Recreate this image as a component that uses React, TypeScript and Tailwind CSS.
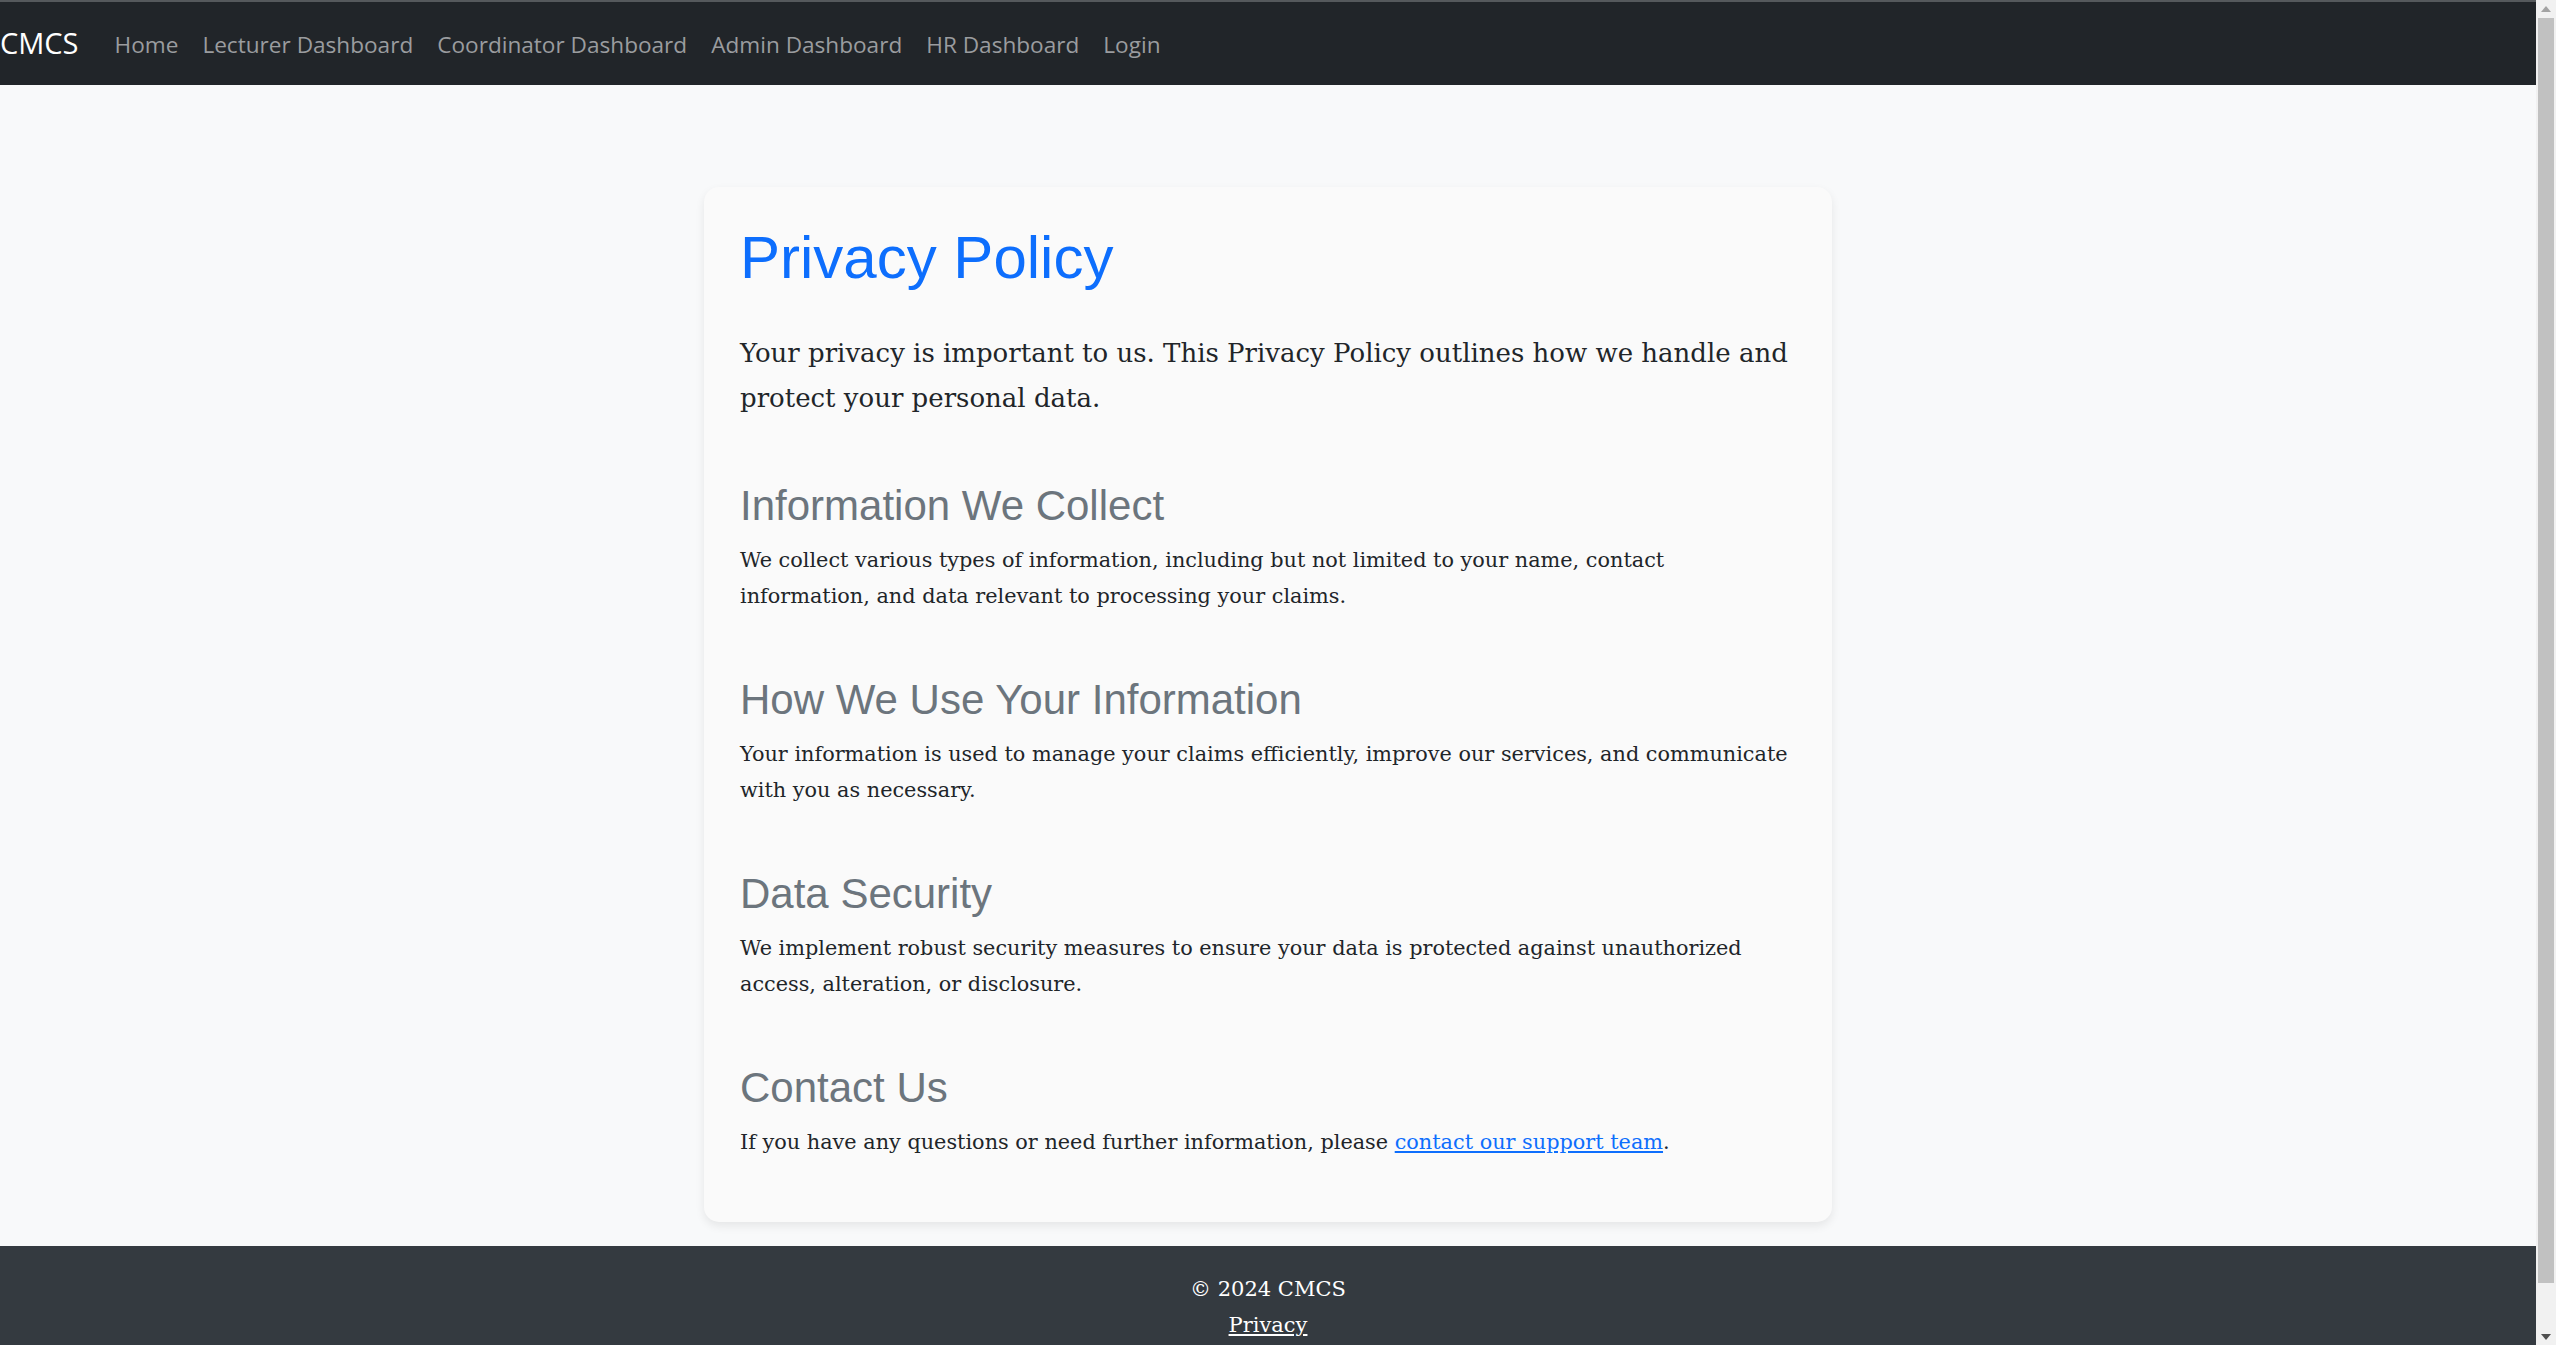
const sans = { fontFamily: '"Open Sans", "Noto Sans", sans-serif' }
const heading = { fontFamily: '"Liberation Sans", Arial, sans-serif' }
const serif = { fontFamily: '"DejaVu Serif", Georgia, serif' }

const navLinks = ['Home', 'Lecturer Dashboard', 'Coordinator Dashboard', 'Admin Dashboard', 'HR Dashboard', 'Login']

const sections = [
  {
    title: 'Information We Collect',
    lines: [
      'We collect various types of information, including but not limited to your name, contact',
      'information, and data relevant to processing your claims.',
    ],
  },
  {
    title: 'How We Use Your Information',
    lines: [
      'Your information is used to manage your claims efficiently, improve our services, and communicate',
      'with you as necessary.',
    ],
  },
  {
    title: 'Data Security',
    lines: [
      'We implement robust security measures to ensure your data is protected against unauthorized',
      'access, alteration, or disclosure.',
    ],
  },
]

function Lines({ lines }: { lines: string[] }) {
  return (
    <>
      {lines.map((line, i) => (
        <span key={i} className="block whitespace-nowrap">
          {line}
        </span>
      ))}
    </>
  )
}

function Scrollbar() {
  return (
    <div className="w-[20px] h-full bg-[#f1f1f1] flex flex-col items-center shrink-0">
      <div className="h-[17px] w-full flex items-center justify-center">
        <svg width="10" height="6" viewBox="0 0 10 6">
          <polygon points="5,0 10,6 0,6" fill="#a3a3a3" />
        </svg>
      </div>
      <div className="w-[16px] h-[1265px] bg-[#c1c1c1] mt-[1px]" />
      <div className="flex-1" />
      <div className="h-[17px] w-full flex items-center justify-center">
        <svg width="10" height="6" viewBox="0 0 10 6">
          <polygon points="0,0 10,0 5,6" fill="#505050" />
        </svg>
      </div>
    </div>
  )
}

export default function App() {
  return (
    <div className="flex h-screen overflow-hidden">
      <div className="flex-1 min-w-0 overflow-hidden bg-[#f8f9fa]">
        <nav className="h-[85px] bg-[#212529] border-t-2 border-[#55595c] flex items-center" style={sans}>
          <a className="text-white text-[29px] leading-none mr-[24px] pb-[2px]">CMCS</a>
          <ul className="flex items-center">
            {navLinks.map((link) => (
              <li key={link}>
                <a className="block px-[12px] text-[22.6px] text-[#9a9c9f] pt-[2px]">{link}</a>
              </li>
            ))}
          </ul>
        </nav>

        <main className="pt-[102px] pb-[24px]">
          <div className="w-[1128px] mx-auto bg-[#fafafa] rounded-[15px] shadow-[0_4px_10px_rgba(0,0,0,0.08)] pl-[36px] pr-[20px] pt-[35px] pb-[62px]">
            <h1 className="text-[60px] leading-[72px] text-[#0d6efd] mb-[37px]" style={heading}>
              Privacy Policy
            </h1>
            <p className="text-[26px] leading-[45px] text-[#212529] mb-[60px]" style={serif}>
              <Lines
                lines={[
                  'Your privacy is important to us. This Privacy Policy outlines how we handle and',
                  'protect your personal data.',
                ]}
              />
            </p>

            <div className="flex flex-col gap-[61px]">
              {sections.map((s) => (
                <section key={s.title}>
                  <h3 className="text-[42px] leading-[50px] text-[#6c757d] mb-[11px]" style={heading}>
                    {s.title}
                  </h3>
                  <p className="text-[20.8px] leading-[36px] text-[#212529]" style={serif}>
                    <Lines lines={s.lines} />
                  </p>
                </section>
              ))}
              <section>
                <h3 className="text-[42px] leading-[50px] text-[#6c757d] mb-[11px]" style={heading}>
                  Contact Us
                </h3>
                <p className="text-[20.8px] leading-[36px] text-[#212529]" style={serif}>
                  If you have any questions or need further information, please{' '}
                  <a className="text-[#0d6efd] underline">contact our support team</a>.
                </p>
              </section>
            </div>
          </div>
        </main>

        <footer className="bg-[#343a40] text-white text-center pt-[25px] pb-[25px] text-[21px] leading-[36px]" style={serif}>
          <p>© 2024 CMCS</p>
          <a className="underline">Privacy</a>
        </footer>
      </div>
      <Scrollbar />
    </div>
  )
}
